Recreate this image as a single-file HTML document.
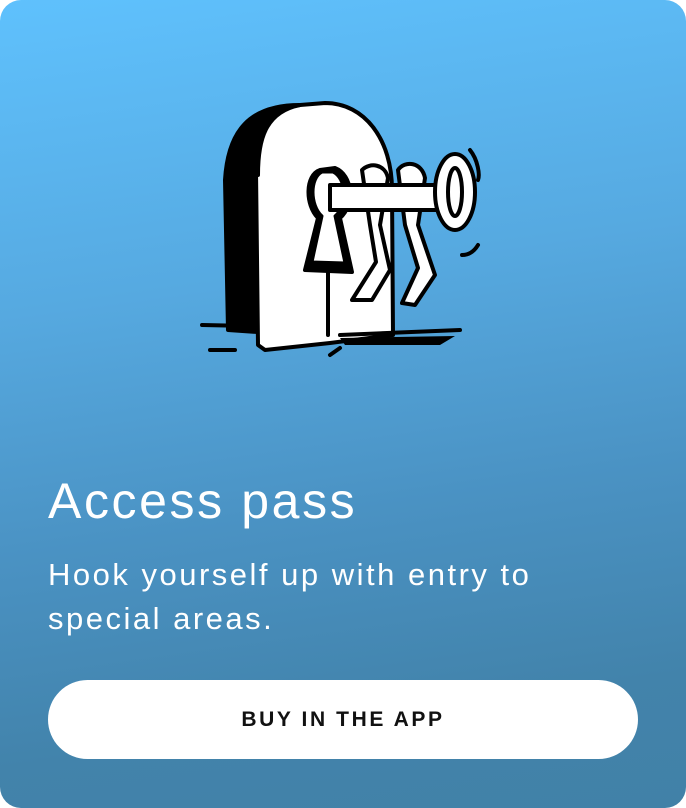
<!DOCTYPE html>
<html><head><style>
html,body{margin:0;padding:0;background:#fff;}
.card{position:relative;width:686px;height:808px;border-radius:21px;overflow:hidden;
background:linear-gradient(172deg,#5fc1fd 0%,#56a9e0 35%,#4a92c3 62%,#4283ab 85%,#4181a7 100%);
font-family:"Liberation Sans",sans-serif;color:#fff;}
h1{position:absolute;left:48px;top:472px;margin:0;font-weight:400;font-size:50px;letter-spacing:2.6px;}
p{position:absolute;left:48px;top:553px;margin:0;font-size:31px;line-height:44px;letter-spacing:2.5px;}
.btn{position:absolute;left:48px;top:680px;width:590px;height:79px;border-radius:40px;background:#fff;color:#111;
font-weight:700;font-size:21px;letter-spacing:2.6px;display:flex;align-items:center;justify-content:center;}
svg{position:absolute;left:0;top:0;}
</style></head><body><div class="card">
<svg width="686" height="400" viewBox="0 0 686 400">
<g stroke="#000" stroke-width="4" stroke-linecap="round" stroke-linejoin="round">
<path d="M300 105 C250 105 228 130 225 180 L228 330 L300 335 Z" fill="#000"/>
<path d="M258 345 L256 170 C256 125 275 108 300 105 L325 103 C365 103 392 140 392 190 L393 335 L330 343 L265 350 Z" fill="#fff"/>
<path d="M300 105 C265 112 258 140 258 175" fill="none"/>
<path d="M328 335 L328 270" fill="none"/>
<path d="M320 170 C305 175 305 205 318 218 L305 270 L352 272 L340 218 C355 205 353 175 335 168 Z" fill="#000"/>
<path d="M322 172 C310 178 310 205 322 216 L312 262 L345 263 L335 216 C348 205 346 178 333 172 Z" fill="#fff" stroke-width="3"/>
<path d="M362 170 C370 162 385 164 388 178 L380 225 L390 270 L372 300 L352 300 L376 262 L370 225 Z" fill="#fff"/>
<path d="M398 170 C405 160 422 162 425 178 L418 225 L435 275 L415 305 L402 303 L418 268 L405 225 Z" fill="#fff"/>
<path d="M330 185 L440 185 L440 210 L330 210 Z" fill="#fff"/>
<ellipse cx="455" cy="192" rx="20" ry="38" fill="#fff"/>
<ellipse cx="455" cy="192" rx="7" ry="24" fill="none"/>
<path d="M202 325 L250 326 M340 335 L460 330 M210 350 L235 350 M330 355 L340 348" fill="none"/>
<path d="M470 150 C478 160 480 175 478 180 M462 255 C470 255 475 250 478 245" fill="none"/>
</g>
<path d="M340 338 L455 336 L440 345 L345 345 Z" fill="#000"/>
</svg>
<h1>Access pass</h1>
<p>Hook yourself up with entry to<br>special areas.</p>
<div class="btn">BUY IN THE APP</div>
</div></body></html>
